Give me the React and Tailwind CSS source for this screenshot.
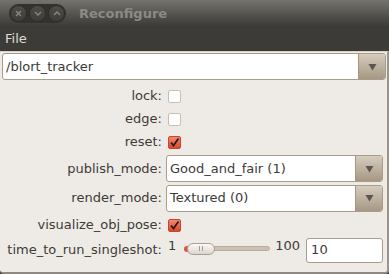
import React from "react";

const font = { fontFamily: '"DejaVu Sans", "Liberation Sans", sans-serif' };

function Arrow() {
  return (
    <svg width="9" height="8" viewBox="0 0 9 8">
      <path d="M0.5 1 L8.5 1 L4.5 7.5 Z" fill="#5b554d" />
    </svg>
  );
}

function Combo({ text, className = "" }) {
  return (
    <div className={"flex h-[27px] rounded-[3px] border border-[#a89d8b] bg-white overflow-hidden " + className}>
      <div className="flex-1 flex items-center pl-[3px] text-[13px] text-[#3c3b37]">{text}</div>
      <div className="w-[27px] flex items-center justify-center bg-gradient-to-b from-[#d6cdbf] to-[#a69883] border-l border-[#a39680]">
        <Arrow />
      </div>
    </div>
  );
}

function Check({ checked }) {
  if (checked) {
    return (
      <div className="w-[13px] h-[13px] rounded-[2px] border border-[#c8442c] bg-gradient-to-b from-[#f08a72] to-[#d9452c] flex items-center justify-center">
        <svg width="11" height="11" viewBox="0 0 11 11">
          <path d="M2 5.5 L4.5 8.5 L9.5 1.5" stroke="#2a1a16" strokeWidth="1.8" fill="none" />
        </svg>
      </div>
    );
  }
  return <div className="w-[13px] h-[13px] rounded-[2px] border border-[#c5bfb5] bg-white" />;
}

function Label({ children }) {
  return <div className="w-[161px] text-right pr-[1px] text-[13px] text-[#3c3b37]">{children}</div>;
}

function WinButton({ children }) {
  return (
    <div className="w-[17px] h-[17px] rounded-full bg-gradient-to-b from-[#4d4c47] to-[#3e3d39] border border-[#2f2e2a] flex items-center justify-center">
      {children}
    </div>
  );
}

export default function App() {
  return (
    <div style={font} className="w-[389px] h-[274px] bg-[#3c3b37] flex flex-col overflow-hidden">
      {/* Title bar */}
      <div className="h-[26px] flex items-center bg-gradient-to-b from-[#75736e] to-[#3c3b37] px-[9px]">
        <div className="flex gap-[2px] items-center rounded-full bg-[#33322e] p-[1px] h-[19px]">
          <WinButton>
            <svg width="7" height="7" viewBox="0 0 7 7"><path d="M1 1 L6 6 M6 1 L1 6" stroke="#8b8984" strokeWidth="1.3" /></svg>
          </WinButton>
          <WinButton>
            <svg width="8" height="5" viewBox="0 0 8 5"><path d="M1 1 L4 4 L7 1" stroke="#8b8984" strokeWidth="1.3" fill="none" /></svg>
          </WinButton>
          <WinButton>
            <svg width="8" height="5" viewBox="0 0 8 5"><path d="M1 4 L4 1 L7 4" stroke="#8b8984" strokeWidth="1.3" fill="none" /></svg>
          </WinButton>
        </div>
        <div className="ml-[13px] text-[13px] font-bold text-[#8d8a83] leading-none">Reconfigure</div>
      </div>
      {/* Menu bar */}
      <div className="h-[25px] flex items-center px-[5px] text-[13px] text-[#dfdbd2]">File</div>
      {/* Body */}
      <div className="flex-1 bg-[#eeebe6] border-t border-[#d8d2c7] rounded-b-[4px] border-b-[2px] border-b-[#8d8880] border-r-[2px] border-r-[#9a958c] flex flex-col pl-[2px] pb-[4px]">
        <div className="pt-[1px] pr-[1px]">
          <Combo text="/blort_tracker" className="h-[27px] border-[#9d927f]" />
        </div>
        <div className="flex flex-col mt-[4px] pr-[4px]">
          <div className="h-[24px] flex items-center gap-[5px]">
            <Label>lock:</Label>
            <Check />
          </div>
          <div className="h-[22px] flex items-center gap-[5px]">
            <Label>edge:</Label>
            <Check />
          </div>
          <div className="h-[24px] flex items-center gap-[5px]">
            <Label>reset:</Label>
            <Check checked />
          </div>
          <div className="h-[29px] flex items-center gap-[3px]">
            <Label>publish_mode:</Label>
            <Combo text="Good_and_fair (1)" className="flex-1" />
          </div>
          <div className="h-[30px] flex items-center gap-[3px]">
            <Label>render_mode:</Label>
            <Combo text="Textured (0)" className="flex-1" />
          </div>
          <div className="h-[24px] flex items-center gap-[5px]">
            <Label>visualize_obj_pose:</Label>
            <Check checked />
          </div>
          <div className="h-[26px] flex items-center gap-[5px]">
            <Label>time_to_run_singleshot:</Label>
            <div className="flex-1 flex items-center">
              <div className="text-[13px] text-[#3c3b37] self-start mt-[1px] leading-[13px]">1</div>
              <div className="relative w-[89px] h-[14px] ml-[8px] mb-[3px] flex items-center">
                <div className="absolute left-[0px] w-[6px] h-[6px] rounded-full bg-[#e0533a]" />
                <div className="absolute left-[3px] right-[3px] h-[5px] rounded-full bg-[#c9c1b3] border border-[#b8ae9e]" />
                <div className="absolute left-[3px] w-[28px] h-[12px] rounded-full border border-[#a9a091] bg-gradient-to-b from-[#fbfaf8] to-[#dcd6cc] flex items-center justify-center gap-[2px]">
                  <div className="w-[1px] h-[5px] bg-[#a39b8f]" />
                  <div className="w-[1px] h-[5px] bg-[#a39b8f]" />
                </div>
              </div>
              <div className="text-[13px] text-[#3c3b37] self-start mt-[1px] leading-[13px] ml-[2px]">100</div>
              <div className="ml-[6px] flex-1 h-[25px] rounded-[3px] border border-[#a89d8b] bg-white flex items-center pl-[4px] text-[13px] text-[#3c3b37]">10</div>
            </div>
          </div>
        </div>
      </div>
    </div>
  );
}
